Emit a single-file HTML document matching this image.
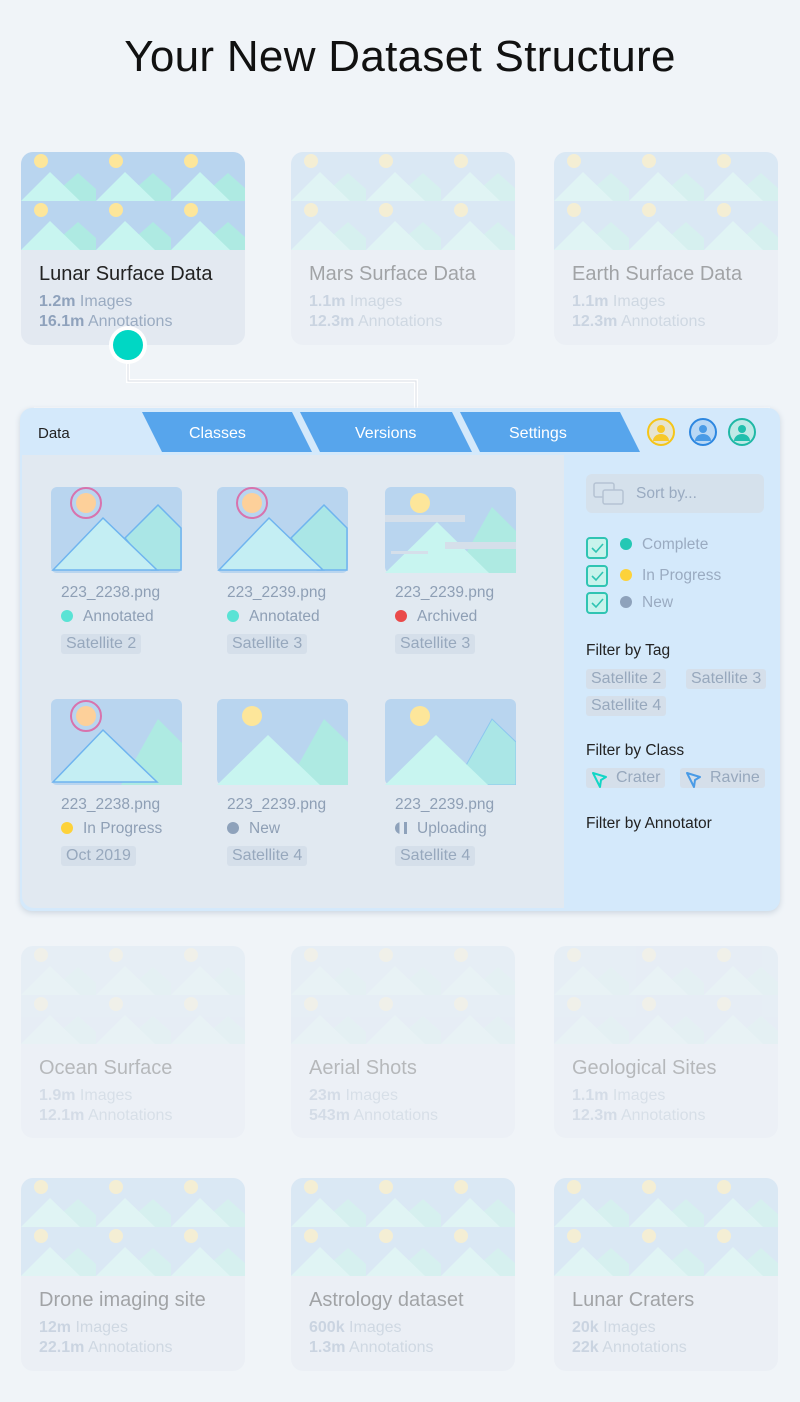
<!DOCTYPE html>
<html><head><meta charset="utf-8"><style>
*{margin:0;padding:0;box-sizing:border-box}
body{width:800px;height:1402px;background:#f0f4f8;font-family:"Liberation Sans",sans-serif;position:relative;overflow:hidden;color:#333}
h1{position:absolute;top:32px;left:0;width:800px;text-align:center;font-weight:400;font-size:44px;color:#111;letter-spacing:0.3px}
.card{position:absolute;width:224px;height:193px;border-radius:12px;background:#e3e9f1;overflow:hidden}
.card svg{display:block}
.card .t{position:absolute;left:18px;top:111px;font-size:20px;color:#222}
.card .s{position:absolute;left:18px;font-size:16px;color:#9aabc1}
.card .s b{color:#8fa2bc}
.f1{opacity:.38}.f2{opacity:.28}
.panel{position:absolute;left:20px;top:408px;width:760px;height:503px;border-radius:12px;background:#d4e9fb;box-shadow:0 2px 6px rgba(150,170,190,.4);overflow:hidden}
.main{position:absolute;left:2px;top:47px;width:542px;height:453px;background:#e1e9f1;border-radius:0 0 0 12px}
.tab{position:absolute;top:17px;font-size:16px;color:#fff}
.th{position:absolute;width:131px}
.th .fn{position:absolute;left:10px;top:97px;font-size:15.5px;color:#8e9fb5;white-space:nowrap}
.th .st{position:absolute;left:10px;top:121px;font-size:15.5px;color:#8e9fb5;white-space:nowrap}
.dot{display:inline-block;width:12px;height:12px;border-radius:50%;margin-right:10px;vertical-align:-1px}
.tag{position:absolute;background:#d5dfea;color:#97a8bd;font-size:16px;padding:1px 5px;border-radius:3px;white-space:nowrap}
.side{position:absolute;color:#9aabc1;font-size:15.5px}
.h{position:absolute;left:566px;font-size:15.5px;color:#222}
.cb{position:absolute;left:566px;width:22px;height:22px;border:2px solid #2fc4b2;border-radius:4px;background:#c8f3ec}
</style></head><body>
<svg width="0" height="0" style="position:absolute"><defs>
<g id="tile"><rect width="75" height="49" fill="#b9d5ef"/><polygon points="25,49 57,21 75,37 75,49" fill="#aeeae2"/><polygon points="0,49 29,20 59,49" fill="#c8f5f0"/><circle cx="20" cy="9" r="7" fill="#fde69a"/></g>
<g id="cimg"><use href="#tile" x="0" y="0"/><use href="#tile" x="75" y="0"/><use href="#tile" x="150" y="0"/><use href="#tile" x="0" y="49"/><use href="#tile" x="75" y="49"/><use href="#tile" x="150" y="49"/></g>
</defs></svg>
<h1>Your New Dataset Structure</h1>

<div class="card" style="left:21px;top:152px"><svg width="224" height="98"><use href="#cimg"/></svg><div class="t">Lunar Surface Data</div><div class="s" style="top:141px"><b>1.2m</b> Images</div><div class="s" style="top:161px"><b>16.1m</b> Annotations</div></div>
<div class="card f1" style="left:291px;top:152px"><svg width="224" height="98"><use href="#cimg"/></svg><div class="t">Mars Surface Data</div><div class="s" style="top:141px"><b>1.1m</b> Images</div><div class="s" style="top:161px"><b>12.3m</b> Annotations</div></div>
<div class="card f1" style="left:554px;top:152px"><svg width="224" height="98"><use href="#cimg"/></svg><div class="t">Earth Surface Data</div><div class="s" style="top:141px"><b>1.1m</b> Images</div><div class="s" style="top:161px"><b>12.3m</b> Annotations</div></div>

<div class="card f2" style="left:21px;top:946px;height:192px"><svg width="224" height="98" style="opacity:.5"><use href="#cimg"/></svg><div class="t">Ocean Surface</div><div class="s" style="top:141px"><b>1.9m</b> Images</div><div class="s" style="top:161px"><b>12.1m</b> Annotations</div></div>
<div class="card f2" style="left:291px;top:946px;height:192px"><svg width="224" height="98" style="opacity:.5"><use href="#cimg"/></svg><div class="t">Aerial Shots</div><div class="s" style="top:141px"><b>23m</b> Images</div><div class="s" style="top:161px"><b>543m</b> Annotations</div></div>
<div class="card f2" style="left:554px;top:946px;height:192px"><svg width="224" height="98" style="opacity:.5"><use href="#cimg"/></svg><div class="t">Geological Sites</div><div class="s" style="top:141px"><b>1.1m</b> Images</div><div class="s" style="top:161px"><b>12.3m</b> Annotations</div></div>

<div class="card f1" style="left:21px;top:1178px"><svg width="224" height="98"><use href="#cimg"/></svg><div class="t">Drone imaging site</div><div class="s" style="top:141px"><b>12m</b> Images</div><div class="s" style="top:161px"><b>22.1m</b> Annotations</div></div>
<div class="card f1" style="left:291px;top:1178px"><svg width="224" height="98"><use href="#cimg"/></svg><div class="t">Astrology dataset</div><div class="s" style="top:141px"><b>600k</b> Images</div><div class="s" style="top:161px"><b>1.3m</b> Annotations</div></div>
<div class="card f1" style="left:554px;top:1178px"><svg width="224" height="98"><use href="#cimg"/></svg><div class="t">Lunar Craters</div><div class="s" style="top:141px"><b>20k</b> Images</div><div class="s" style="top:161px"><b>22k</b> Annotations</div></div>

<!-- connector -->
<svg style="position:absolute;left:0;top:320px" width="800" height="95">
<path d="M128 25 V61 H416 V90" fill="none" stroke="#fff" stroke-width="4"/>
<path d="M128 25 V61 H416 V90" fill="none" stroke="#d8dee6" stroke-width="1"/>
<path d="M34 89 H770" stroke="#fff" stroke-width="3"/>
<circle cx="128" cy="25" r="19" fill="#fff"/><circle cx="128" cy="25" r="15" fill="#00d7c4"/>
</svg>

<div class="panel">
<svg style="position:absolute;left:0;top:4px" width="760" height="42">
<polygon points="122,0 272,0 292,40 142,40" fill="#57a5ec"/>
<polygon points="280,0 432,0 452,40 300,40" fill="#57a5ec"/>
<polygon points="440,0 600,0 620,40 460,40" fill="#57a5ec"/>
<g stroke-width="2"><circle cx="641" cy="20" r="13" fill="#e6e4d0" stroke="#f5c518"/><circle cx="641" cy="17" r="4" fill="#f7c82a"/><path d="M633 29 a8 7 0 0 1 16 0z" fill="#f7c82a"/>
<circle cx="683" cy="20" r="13" fill="#b9d8f5" stroke="#2d87e0"/><circle cx="683" cy="17" r="4" fill="#4a9be6"/><path d="M675 29 a8 7 0 0 1 16 0z" fill="#4a9be6"/>
<circle cx="722" cy="20" r="13" fill="#bfe9e6" stroke="#1fb8a5"/><circle cx="722" cy="17" r="4" fill="#21bfad"/><path d="M714 29 a8 7 0 0 1 16 0z" fill="#21bfad"/></g>
</svg>
<div class="tab" style="left:18px;color:#222;font-size:15px">Data</div>
<div class="tab" style="left:169px">Classes</div>
<div class="tab" style="left:335px">Versions</div>
<div class="tab" style="left:489px">Settings</div>
<div class="main"></div>

<!-- thumbnails -->
<div class="th" style="left:31px;top:79px"><svg width="131" height="86"><rect width="131" height="86" rx="6" fill="#b9d5ef"/><polygon points="74,51 107,18 130,41 130,83 100,83" fill="#aae6e6" stroke="#6fb4ef" stroke-width="1.5"/><polygon points="2,83 52,31 106,83" fill="#c4eef3" stroke="#6fb4ef" stroke-width="1.5"/><circle cx="35" cy="16" r="10" fill="#fdd09a"/><circle cx="35" cy="16" r="15" fill="none" stroke="#d873ad" stroke-width="2"/></svg><div class="fn">223_2238.png</div><div class="st"><span class="dot" style="background:#5ae3d5"></span>Annotated</div><div class="tag" style="left:10px;top:147px">Satellite 2</div></div>
<div class="th" style="left:197px;top:79px"><svg width="131" height="86"><rect width="131" height="86" rx="6" fill="#b9d5ef"/><polygon points="74,51 107,18 130,41 130,83 100,83" fill="#aae6e6" stroke="#6fb4ef" stroke-width="1.5"/><polygon points="2,83 52,31 106,83" fill="#c4eef3" stroke="#6fb4ef" stroke-width="1.5"/><circle cx="35" cy="16" r="10" fill="#fdd09a"/><circle cx="35" cy="16" r="15" fill="none" stroke="#d873ad" stroke-width="2"/></svg><div class="fn">223_2239.png</div><div class="st"><span class="dot" style="background:#5ae3d5"></span>Annotated</div><div class="tag" style="left:10px;top:147px">Satellite 3</div></div>
<div class="th" style="left:365px;top:79px"><svg width="131" height="86"><rect width="131" height="86" rx="6" fill="#b9d5ef"/><polygon points="70,86 107,20 131,44 131,86" fill="#aeeae2"/><polygon points="0,86 52,35 104,86" fill="#c8f5f0"/><circle cx="35" cy="16" r="10" fill="#fde69a"/><rect x="0" y="28" width="80" height="7" fill="#d5dfea"/><rect x="60" y="55" width="71" height="7" fill="#d5dfea"/><rect x="6" y="64" width="37" height="3" fill="#d5dfea"/></svg><div class="fn">223_2239.png</div><div class="st"><span class="dot" style="background:#ea4a4a"></span>Archived</div><div class="tag" style="left:10px;top:147px">Satellite 3</div></div>

<div class="th" style="left:31px;top:291px"><svg width="131" height="86"><rect width="131" height="86" rx="6" fill="#b9d5ef"/><polygon points="70,86 107,20 131,44 131,86" fill="#aeeae2"/><polygon points="2,83 52,31 106,83" fill="#c4eef3" stroke="#6fb4ef" stroke-width="1.5"/><circle cx="35" cy="17" r="10" fill="#fdd09a"/><circle cx="35" cy="17" r="15" fill="none" stroke="#d873ad" stroke-width="2"/></svg><div class="fn">223_2238.png</div><div class="st"><span class="dot" style="background:#fdd23a"></span>In Progress</div><div class="tag" style="left:10px;top:147px">Oct 2019</div></div>
<div class="th" style="left:197px;top:291px"><svg width="131" height="86"><rect width="131" height="86" rx="6" fill="#b9d5ef"/><polygon points="70,86 107,20 131,43 131,86" fill="#aeeae2"/><polygon points="0,86 51,36 103,86" fill="#c8f5f0"/><circle cx="35" cy="17" r="10" fill="#fde69a"/></svg><div class="fn">223_2239.png</div><div class="st"><span class="dot" style="background:#8ea2bb"></span>New</div><div class="tag" style="left:10px;top:147px">Satellite 4</div></div>
<div class="th" style="left:365px;top:291px"><svg width="131" height="86"><rect width="131" height="86" rx="6" fill="#b9d5ef"/><polygon points="70,86 107,20 131,43 131,86" fill="#aae6e6" stroke="#8cc6ef" stroke-width="1"/><polygon points="0,86 51,36 103,86" fill="#c8f5f0"/><circle cx="35" cy="17" r="10" fill="#fde69a"/></svg><div class="fn">223_2239.png</div><div class="st"><span class="dot" style="background:linear-gradient(90deg,#8ea2bb 50%,transparent 50%);border-right:3px solid #8ea2bb;border-radius:50% 0 0 50%"></span>Uploading</div><div class="tag" style="left:10px;top:147px">Satellite 4</div></div>

<!-- sidebar -->
<div style="position:absolute;left:566px;top:66px;width:178px;height:39px;background:#d5e1ec;border-radius:6px"></div>
<svg style="position:absolute;left:573px;top:73px" width="34" height="26"><rect x="1" y="2" width="20" height="14" rx="2" fill="none" stroke="#b5c3d3" stroke-width="1.5"/><rect x="10" y="9" width="20" height="14" rx="2" fill="#d5e1ec" stroke="#b5c3d3" stroke-width="1.5"/></svg>
<div class="side" style="left:616px;top:77px">Sort by...</div>

<div class="cb" style="top:129px"></div><div class="cb" style="top:157px"></div><div class="cb" style="top:184px"></div>
<svg style="position:absolute;left:566px;top:129px" width="22" height="80" fill="none" stroke="#2fc4b2" stroke-width="1.6"><path d="M6 11 l4 4 l7 -8"/><path d="M6 39 l4 4 l7 -8"/><path d="M6 66 l4 4 l7 -8"/></svg>
<div class="side" style="left:600px;top:128px"><span class="dot" style="background:#24c8b4"></span>Complete</div>
<div class="side" style="left:600px;top:159px"><span class="dot" style="background:#fdd23a"></span>In Progress</div>
<div class="side" style="left:600px;top:186px"><span class="dot" style="background:#8ea2bb"></span>New</div>

<div class="h" style="top:234px">Filter by Tag</div>
<div class="tag" style="left:566px;top:261px">Satellite 2</div>
<div class="tag" style="left:666px;top:261px">Satellite 3</div>
<div class="tag" style="left:566px;top:288px">Satellite 4</div>
<div class="h" style="top:334px">Filter by Class</div>
<div class="tag" style="left:566px;top:360px;padding-left:30px">Crater</div>
<div class="tag" style="left:660px;top:360px;padding-left:30px">Ravine</div>
<svg style="position:absolute;left:570px;top:362px" width="20" height="20"><path d="M3 3 L16 7 L11 10 L10 17 Z" fill="none" stroke="#12d6c6" stroke-width="2" stroke-linejoin="round"/></svg>
<svg style="position:absolute;left:664px;top:362px" width="20" height="20"><path d="M3 3 L16 7 L11 10 L10 17 Z" fill="none" stroke="#4a9be6" stroke-width="2" stroke-linejoin="round"/></svg>
<div class="h" style="top:407px">Filter by Annotator</div>
</div>
</body></html>
